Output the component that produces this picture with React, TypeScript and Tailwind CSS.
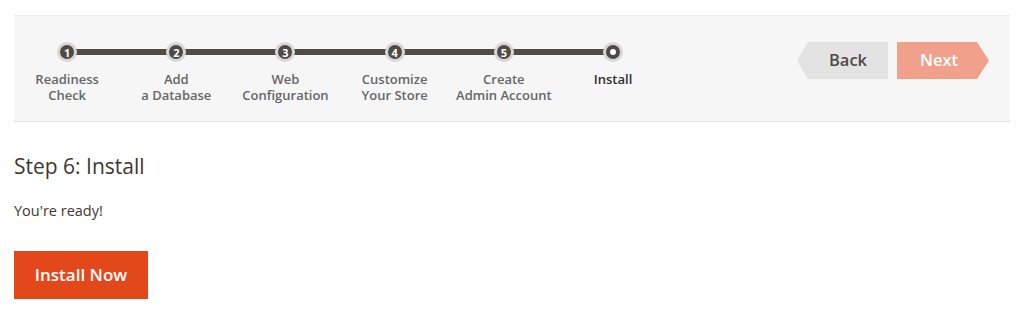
const steps = [
  { n: "1", label: ["Readiness", "Check"] },
  { n: "2", label: ["Add", "a Database"] },
  { n: "3", label: ["Web", "Configuration"] },
  { n: "4", label: ["Customize", "Your Store"] },
  { n: "5", label: ["Create", "Admin Account"] },
  { n: "", label: ["Install"], active: true },
];

const App = () => {
  return (
    <div className="w-[1024px] h-[324px] bg-white font-['Open_Sans',sans-serif] text-[#41362f]">
      <div className="pt-[15px] px-[14px]">
        {/* progress bar */}
        <div className="flex justify-between bg-[#f6f6f6] border-t border-b border-t-[#ececec] border-b-[#e3e3e3] pt-[26px] pb-[18px] pr-[21px]">
          <div className="relative flex ml-[-1.5px]">
            <div className="absolute left-[54.6px] right-[54.6px] top-[7px] h-[6px] bg-[#514943]" />
            {steps.map((step, i) => (
              <div key={i} className="relative w-[109.2px] flex flex-col items-center">
                <div className="w-[20px] h-[20px] rounded-full bg-[#d6d6d6] flex items-center justify-center">
                  <div className="w-[14px] h-[14px] rounded-full bg-[#514943] flex items-center justify-center">
                    {step.active ? (
                      <div className="w-[6px] h-[6px] rounded-full bg-white" />
                    ) : (
                      <span className="text-[11px] leading-none font-bold text-white">{step.n}</span>
                    )}
                  </div>
                </div>
                <div
                  className={
                    "mt-[9px] text-[13px] leading-[16px] font-semibold text-center whitespace-nowrap " +
                    (step.active ? "text-[#303030]" : "text-[#666]")
                  }
                >
                  {step.label.map((l, j) => (
                    <div key={j}>{l}</div>
                  ))}
                </div>
              </div>
            ))}
          </div>

          <div className="flex items-start gap-[9px]">
            <button className="w-[91px] h-[37px] pl-[11px] bg-[#e3e3e3] text-[#514943] text-[16.5px] font-semibold [clip-path:polygon(11px_0,100%_0,100%_100%,11px_100%,0_50%)]">
              Back
            </button>
            <button className="w-[92px] h-[37px] pr-[8px] bg-[#f1a18b] text-white text-[16.5px] font-semibold [clip-path:polygon(0_0,80px_0,100%_50%,80px_100%,0_100%)]">
              Next
            </button>
          </div>
        </div>

        {/* content */}
        <h1 className="mt-[30px] text-[21px] leading-[28px] font-normal text-[#41362f]">Step 6: Install</h1>
        <p className="mt-[21px] text-[14.5px] leading-[20px] text-[#41362f]">You're ready!</p>
        <button className="mt-[30px] w-[134px] h-[48px] bg-[#e3481b] text-white text-[17px] font-semibold">
          Install Now
        </button>
      </div>
    </div>
  );
};

export default App;
